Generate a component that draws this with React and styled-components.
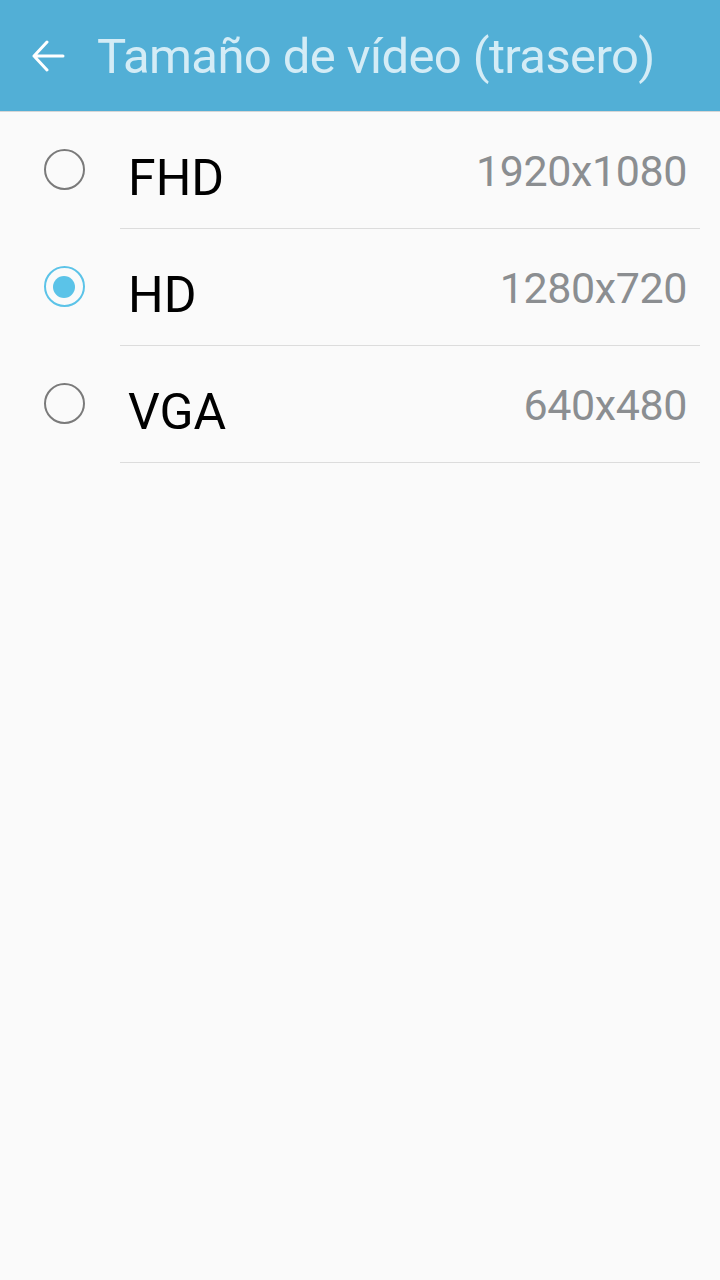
import React, { useState } from "react";
import styled, { createGlobalStyle } from "styled-components";

const GlobalStyle = createGlobalStyle`
  html, body {
    margin: 0;
    padding: 0;
    background: #fafafa;
  }
  #root {
    min-height: 1280px;
  }
`;

const options = [
  { id: "fhd", label: "FHD", size: "1920x1080" },
  { id: "hd", label: "HD", size: "1280x720" },
  { id: "vga", label: "VGA", size: "640x480" },
];

export default function App() {
  const [selected, setSelected] = useState("hd");

  return (
    <>
      <GlobalStyle />
      <Page>
        <Header>
          <BackButton aria-label="Atrás">
            <svg width="34" height="32" viewBox="0 0 34 32" fill="none">
              <path
                d="M32 16H3M16 2L3 16l13 14"
                stroke="#ffffff"
                strokeWidth="3"
                strokeLinecap="round"
                strokeLinejoin="round"
              />
            </svg>
          </BackButton>
          <Title>Tamaño de vídeo (trasero)</Title>
        </Header>

        <List>
          {options.map((opt) => (
            <Row key={opt.id} onClick={() => setSelected(opt.id)}>
              <RadioCell>
                <Radio checked={selected === opt.id} />
              </RadioCell>
              <RowBody>
                <Label>{opt.label}</Label>
                <Size>{opt.size}</Size>
              </RowBody>
            </Row>
          ))}
        </List>
      </Page>
    </>
  );
}

const Page = styled.div`
  min-height: 1280px;
  background: #fafafa;
  font-family: Roboto, "Noto Sans", sans-serif;
`;

const Header = styled.header`
  height: 111px;
  background: #52afd6;
  display: flex;
  align-items: center;
  border-bottom: 1px solid #d6d6d6;
  box-sizing: content-box;
`;

const BackButton = styled.button`
  width: 97px;
  height: 111px;
  padding: 0 0 0 31px;
  border: 0;
  background: none;
  display: flex;
  align-items: center;
  box-sizing: border-box;
  cursor: pointer;
`;

const Title = styled.h1`
  margin: 0;
  font-size: 49px;
  font-weight: 400;
  color: #d4ecf6;
  letter-spacing: -0.6px;
  line-height: 1;
  padding-top: 2px;
`;

const List = styled.div`
  display: flex;
  flex-direction: column;
`;

const Row = styled.div`
  display: flex;
  height: 117px;
  cursor: pointer;
`;

const RadioCell = styled.div`
  width: 120px;
  display: flex;
  justify-content: center;
  padding-top: 37px;
  padding-left: 8px;
  box-sizing: border-box;
`;

const Radio = styled.span`
  width: 41px;
  height: 41px;
  box-sizing: border-box;
  border-radius: 50%;
  border: 2px solid ${(p) => (p.checked ? "#5bc3e8" : "#7a7a7a")};
  display: flex;
  align-items: center;
  justify-content: center;
  &::after {
    content: "";
    width: 22px;
    height: 22px;
    border-radius: 50%;
    background: #5bc3e8;
    display: ${(p) => (p.checked ? "block" : "none")};
  }
`;

const RowBody = styled.div`
  flex: 1;
  margin-right: 20px;
  border-bottom: 1px solid #dcdcdc;
  display: flex;
  justify-content: space-between;
  align-items: flex-start;
  padding-right: 13px;
`;

const Label = styled.span`
  font-size: 50px;
  color: #000000;
  margin-top: 36px;
  margin-left: 8px;
  line-height: 1.2;
`;

const Size = styled.span`
  font-size: 43px;
  color: #8b8e91;
  letter-spacing: -0.4px;
  margin-top: 34px;
  line-height: 1.2;
`;
